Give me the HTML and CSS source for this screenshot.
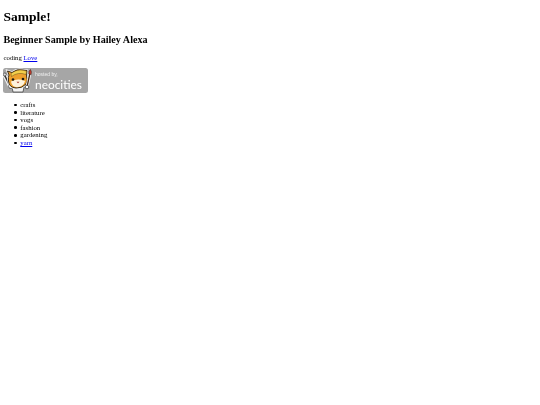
FILE: index.html
```html
<!DOCTYPE html>
<html lang="en">
<head>
<meta charset="utf-8">
<title>Sample!</title>
<link rel="stylesheet" href="styles.css">
</head>
<body>
<h1>Sample!</h1>
<h2>Beginner Sample by Hailey Alexa</h2>
<p>coding <a href="#">Love</a></p>
<a class="badge" href="#" aria-label="hosted by neocities">
<svg class="badge-art" viewBox="0 0 85 25" width="85" height="25" xmlns="http://www.w3.org/2000/svg">
<rect width="85" height="25" rx="2.5" fill="#a6a6a6"/>
<path d="M1.5 7 L7 18" stroke="#f2f2f2" stroke-width="4" stroke-linecap="round"/>
<path d="M1.5 7 L7 18" stroke="#3a3a3a" stroke-width="1.6" stroke-linecap="round"/>
<circle cx="1.8" cy="6.5" r="1.5" fill="#ddd" stroke="#222" stroke-width=".6"/>
<circle cx="7.5" cy="18.5" r="1.9" fill="#fff" stroke="#222" stroke-width=".7"/>
<path d="M9 19 L21 19 L20 24 L10 24 Z" fill="#f4f4f4" stroke="#333" stroke-width=".7"/>
<path d="M4.5 3 L9 4.5 Q14 .5 20 2 L24 2.5 L23.5 8 Q25.5 12 23 16 Q19 20.5 13 20 Q6 19.5 5.5 13 Q5 9 6 7 Z" fill="#eda02d" stroke="#f0f0f0" stroke-width="2.4"/>
<path d="M4.5 3 L9 4.5 Q14 .5 20 2 L24 2.5 L23.5 8 Q25.5 12 23 16 Q19 20.5 13 20 Q6 19.5 5.5 13 Q5 9 6 7 Z" fill="#eda02d" stroke="#2d2010" stroke-width=".9"/>
<path d="M8 5.5 Q14 .8 20 2.3 L23.5 3 L23 6.5 Q15 3.5 8.5 8.5 Z" fill="#f3cf4b" stroke="#4a3210" stroke-width=".4"/>
<path d="M8 13.5 Q14.5 10 22 13 Q20.5 19 14 19.3 Q9 19 8 13.5 Z" fill="#fff3dc"/>
<circle cx="10" cy="11.5" r="1.3" fill="#1f1a14"/>
<circle cx="20" cy="11" r="1.3" fill="#1f1a14"/>
<path d="M13.5 13.8 L16.5 13.8 L15 15.3 Z" fill="#a8352a"/>
<path d="M24 19 L27 5" stroke="#f2f2f2" stroke-width="3" stroke-linecap="round"/>
<path d="M24 19 L27 5" stroke="#4a2a14" stroke-width="1.3" stroke-linecap="round"/>
<path d="M25.8 6 Q25.5 2.5 27.5 1.5 Q29 4 28.2 6.5 Z" fill="#c63a2c" stroke="#2b1a10" stroke-width=".5"/>
<circle cx="24" cy="19" r="1.8" fill="#fff" stroke="#222" stroke-width=".7"/>
<text class="badge-small" x="32" y="7.6">hosted by,</text>
<text class="badge-large" x="32" y="20.8" textLength="47" lengthAdjust="spacingAndGlyphs">neocities</text>
</svg>
</a>
<ul>
<li>crafts</li>
<li>literature</li>
<li>vogs</li>
<li>fashion</li>
<li>gardening</li>
<li><a href="#">yarn</a></li>
</ul>
</body>
</html>
```
FILE: styles.css
```css
html { background: #fff; }
body {
  margin: 3.4px;
  font-family: "Liberation Serif", "Times New Roman", serif;
  font-size: 6.75px;
  line-height: 7.6px;
  color: #000;
  filter: blur(0.3px);
}
h1 { font-size: 13.5px; line-height: 15.5px; margin: 5.9px 0 9px; }
h2 { font-size: 10.125px; line-height: 11.6px; margin: 8.4px 0; }
p { margin: 6.75px 0; }
a { color: #0000ee; }
.badge { display: block; width: 85px; height: 25px; margin-top: 6.75px; }
.badge-art { display: block; }
.badge-small { font-family: "Liberation Sans", Arial, sans-serif; font-size: 5px; fill: #f0f0f0; }
.badge-large { font-family: "Lato", "Open Sans", Arial, sans-serif; font-weight: 400; font-size: 12px; fill: #ffffff; }
ul { margin: 8px 0; padding-left: 10.6px; list-style: none; }
li { display: flex; align-items: center; gap: 3.7px; }
li::before { content: ""; width: 2.6px; height: 2.6px; border-radius: 50%; background: #000; }
```
